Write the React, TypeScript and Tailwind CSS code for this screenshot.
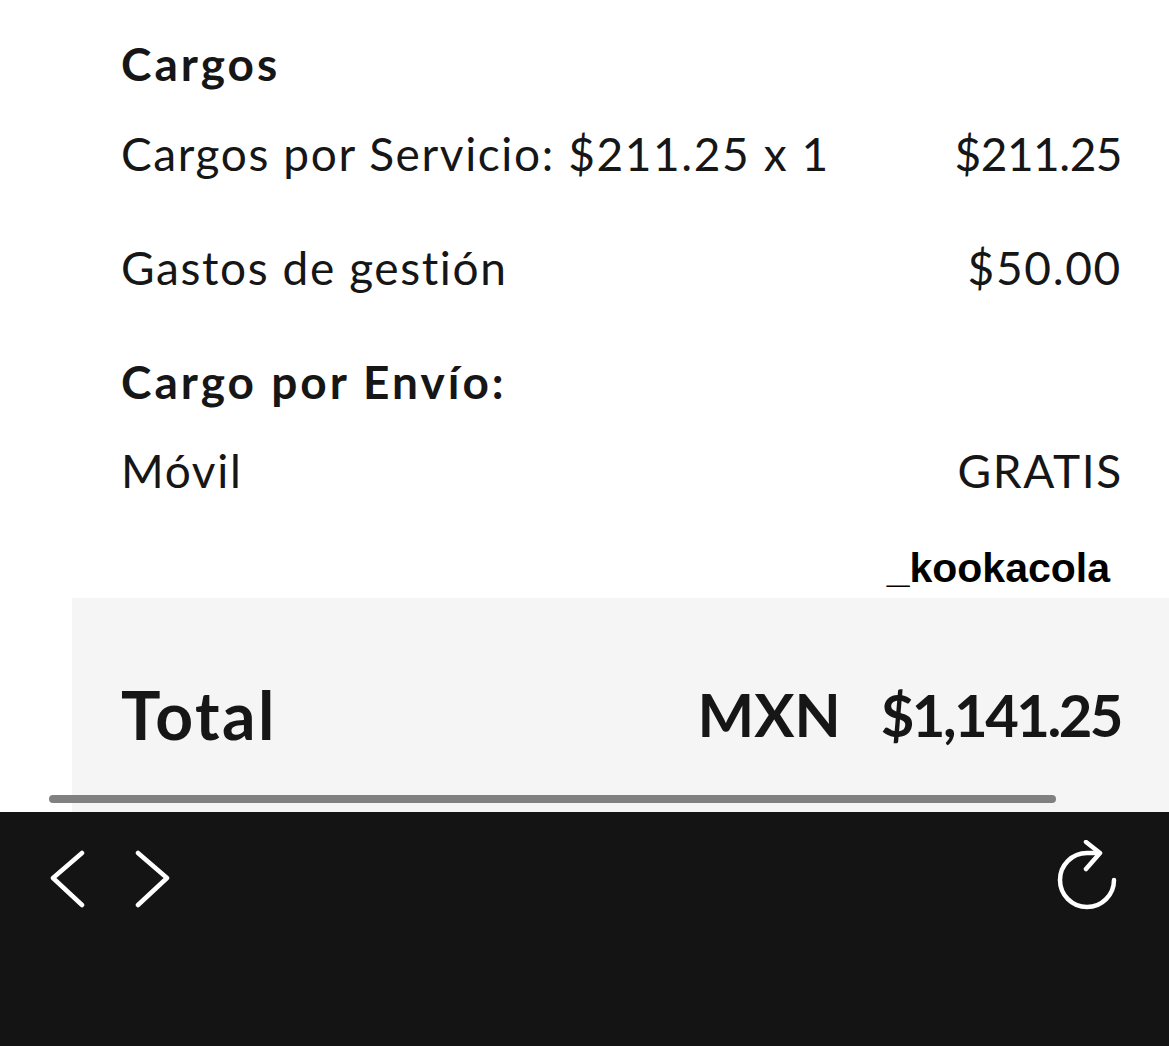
import React from "react";

// Summary rows of the charges section
const rows = [
  { label: "Cargos por Servicio: $211.25 x 1", value: "$211.25", h: "h-[120px]", vt: "tracking-[-0.5px]" },
  { label: "Gastos de gestión", value: "$50.00", h: "h-[108px]", vt: "tracking-[1.7px]" },
];

function ChevronLeft() {
  return (
    <svg width="36" height="60" viewBox="0 0 36 60" fill="none" stroke="white" strokeWidth="4.5" strokeLinecap="round" strokeLinejoin="round">
      <path d="M32 3 L3 28 L32 55" />
    </svg>
  );
}

function ChevronRight() {
  return (
    <svg width="36" height="60" viewBox="0 0 36 60" fill="none" stroke="white" strokeWidth="4.5" strokeLinecap="round" strokeLinejoin="round">
      <path d="M3 3 L32 28 L3 55" />
    </svg>
  );
}

function Refresh() {
  return (
    <svg width="70" height="70" viewBox="0 0 70 70" fill="none" stroke="white" strokeWidth="4.5" strokeLinecap="round" strokeLinejoin="round">
      <path d="M47 13 L35 13 A27 27 0 1 0 62 40" />
      <path d="M34 2 L48 13 L34 29" />
    </svg>
  );
}

export default function App() {
  return (
    <div className="w-[1169px] h-[1046px] bg-white overflow-hidden text-[#161616] font-['Lato',sans-serif]">
      <div className="relative">
        <div className="pt-[33px] pl-[121px] pr-[48px]">
          <div className="h-[60px] flex items-center text-[46px] font-bold tracking-[3px]">Cargos</div>
          {rows.map((r, i) => (
            <div key={i} className={`${r.h} flex items-center justify-between text-[46px] tracking-[1.6px]`}>
              <span>{r.label}</span>
              <span className={`${r.vt} -mr-[1px]`}>{r.value}</span>
            </div>
          ))}
          <div className="h-[120px] flex items-center text-[46px] font-bold tracking-[3px]">Cargo por Envío:</div>
          <div className="h-[58px] flex items-center justify-between text-[46px] tracking-[1.7px]">
            <span>Móvil</span>
            <span className="-mr-[2px]">GRATIS</span>
          </div>
          <div className="h-[99px] flex items-end justify-end pb-[10px] pr-[11px]">
            <span className="font-['Liberation_Sans',Arial,sans-serif] font-bold text-[41px] leading-[40px] text-black">_kookacola</span>
          </div>
        </div>
        <div className="ml-[72px] h-[214px] bg-[#f5f5f5] pt-[18px] pl-[49px] pr-[48px] flex items-center justify-between">
          <span className="text-[66px] font-bold tracking-[2.5px]">Total</span>
          <div className="flex items-center gap-[40px] font-bold">
            <span className="text-[60px]">MXN</span>
            <span className="text-[58px] tracking-[-2.5px]">$1,141.25</span>
          </div>
        </div>
        <div className="absolute left-[49px] top-[795px] w-[1007px] h-[8px] rounded-full bg-[#808080]" />
      </div>
      <div className="h-[234px] bg-[#141414] flex justify-between pl-[50px] pr-[47px]">
        <div className="flex gap-[49px] pt-[38px] h-fit">
          <ChevronLeft />
          <ChevronRight />
        </div>
        <div className="pt-[28px]">
          <Refresh />
        </div>
      </div>
    </div>
  );
}
